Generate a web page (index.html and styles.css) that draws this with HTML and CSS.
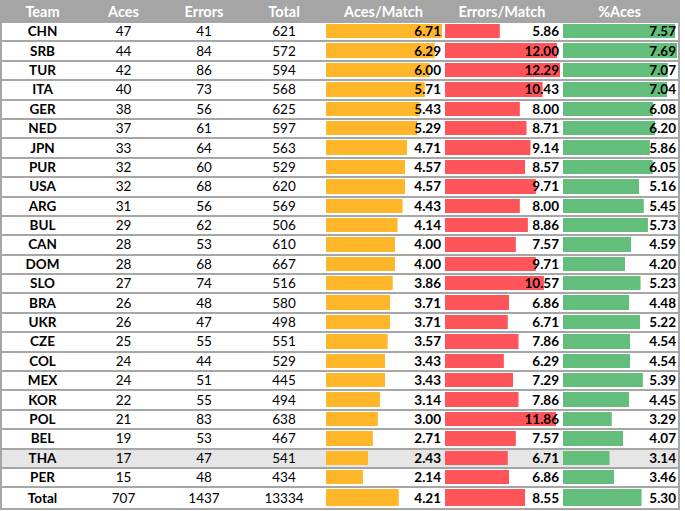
FILE: index.html
```html
<!DOCTYPE html>
<html lang="en">
<head>
<meta charset="utf-8">
<title>Serve statistics</title>
<link rel="stylesheet" href="styles.css">
</head>
<body>
<table class="stats">
  <colgroup>
    <col class="c-team"><col class="c-aces"><col class="c-err"><col class="c-tot">
    <col class="c-am"><col class="c-em"><col class="c-pa">
  </colgroup>
  <thead>
    <tr class="head"><th>Team</th><th>Aces</th><th>Errors</th><th>Total</th><th>Aces/Match</th><th>Errors/Match</th><th>%Aces</th></tr>
  </thead>
  <tbody>
    <tr><td class="team">CHN</td><td>47</td><td>41</td><td>621</td><td class="bar o" style="--p:1">6.71</td><td class="bar r" style="--p:.4768">5.86</td><td class="bar g" style="--p:.9844">7.57</td></tr>
    <tr><td class="team">SRB</td><td>44</td><td>84</td><td>572</td><td class="bar o" style="--p:.9374">6.29</td><td class="bar r" style="--p:.9764">12.00</td><td class="bar g" style="--p:1">7.69</td></tr>
    <tr><td class="team">TUR</td><td>42</td><td>86</td><td>594</td><td class="bar o" style="--p:.8942">6.00</td><td class="bar r" style="--p:1">12.29</td><td class="bar g" style="--p:.9194">7.07</td></tr>
    <tr><td class="team">ITA</td><td>40</td><td>73</td><td>568</td><td class="bar o" style="--p:.8510">5.71</td><td class="bar r" style="--p:.8487">10.43</td><td class="bar g" style="--p:.9155">7.04</td></tr>
    <tr><td class="team">GER</td><td>38</td><td>56</td><td>625</td><td class="bar o" style="--p:.8092">5.43</td><td class="bar r" style="--p:.6509">8.00</td><td class="bar g" style="--p:.7906">6.08</td></tr>
    <tr><td class="team">NED</td><td>37</td><td>61</td><td>597</td><td class="bar o" style="--p:.7884">5.29</td><td class="bar r" style="--p:.7087">8.71</td><td class="bar g" style="--p:.8062">6.20</td></tr>
    <tr><td class="team">JPN</td><td>33</td><td>64</td><td>563</td><td class="bar o" style="--p:.7019">4.71</td><td class="bar r" style="--p:.7437">9.14</td><td class="bar g" style="--p:.7620">5.86</td></tr>
    <tr><td class="team">PUR</td><td>32</td><td>60</td><td>529</td><td class="bar o" style="--p:.6811">4.57</td><td class="bar r" style="--p:.6973">8.57</td><td class="bar g" style="--p:.7867">6.05</td></tr>
    <tr><td class="team">USA</td><td>32</td><td>68</td><td>620</td><td class="bar o" style="--p:.6811">4.57</td><td class="bar r" style="--p:.7901">9.71</td><td class="bar g" style="--p:.6710">5.16</td></tr>
    <tr><td class="team">ARG</td><td>31</td><td>56</td><td>569</td><td class="bar o" style="--p:.6602">4.43</td><td class="bar r" style="--p:.6509">8.00</td><td class="bar g" style="--p:.7087">5.45</td></tr>
    <tr><td class="team">BUL</td><td>29</td><td>62</td><td>506</td><td class="bar o" style="--p:.6170">4.14</td><td class="bar r" style="--p:.7209">8.86</td><td class="bar g" style="--p:.7451">5.73</td></tr>
    <tr><td class="team">CAN</td><td>28</td><td>53</td><td>610</td><td class="bar o" style="--p:.5961">4.00</td><td class="bar r" style="--p:.6159">7.57</td><td class="bar g" style="--p:.5969">4.59</td></tr>
    <tr><td class="team">DOM</td><td>28</td><td>68</td><td>667</td><td class="bar o" style="--p:.5961">4.00</td><td class="bar r" style="--p:.7901">9.71</td><td class="bar g" style="--p:.5462">4.20</td></tr>
    <tr><td class="team">SLO</td><td>27</td><td>74</td><td>516</td><td class="bar o" style="--p:.5753">3.86</td><td class="bar r" style="--p:.8600">10.57</td><td class="bar g" style="--p:.6801">5.23</td></tr>
    <tr><td class="team">BRA</td><td>26</td><td>48</td><td>580</td><td class="bar o" style="--p:.5529">3.71</td><td class="bar r" style="--p:.5582">6.86</td><td class="bar g" style="--p:.5826">4.48</td></tr>
    <tr><td class="team">UKR</td><td>26</td><td>47</td><td>498</td><td class="bar o" style="--p:.5529">3.71</td><td class="bar r" style="--p:.5460">6.71</td><td class="bar g" style="--p:.6788">5.22</td></tr>
    <tr><td class="team">CZE</td><td>25</td><td>55</td><td>551</td><td class="bar o" style="--p:.5320">3.57</td><td class="bar r" style="--p:.6395">7.86</td><td class="bar g" style="--p:.5904">4.54</td></tr>
    <tr><td class="team">COL</td><td>24</td><td>44</td><td>529</td><td class="bar o" style="--p:.5112">3.43</td><td class="bar r" style="--p:.5118">6.29</td><td class="bar g" style="--p:.5904">4.54</td></tr>
    <tr><td class="team">MEX</td><td>24</td><td>51</td><td>445</td><td class="bar o" style="--p:.5112">3.43</td><td class="bar r" style="--p:.5932">7.29</td><td class="bar g" style="--p:.7009">5.39</td></tr>
    <tr><td class="team">KOR</td><td>22</td><td>55</td><td>494</td><td class="bar o" style="--p:.4680">3.14</td><td class="bar r" style="--p:.6395">7.86</td><td class="bar g" style="--p:.5787">4.45</td></tr>
    <tr><td class="team">POL</td><td>21</td><td>83</td><td>638</td><td class="bar o" style="--p:.4471">3.00</td><td class="bar r" style="--p:.9650">11.86</td><td class="bar g" style="--p:.4278">3.29</td></tr>
    <tr><td class="team">BEL</td><td>19</td><td>53</td><td>467</td><td class="bar o" style="--p:.4039">2.71</td><td class="bar r" style="--p:.6159">7.57</td><td class="bar g" style="--p:.5293">4.07</td></tr>
    <tr class="hl"><td class="team">THA</td><td>17</td><td>47</td><td>541</td><td class="bar o" style="--p:.3621">2.43</td><td class="bar r" style="--p:.5460">6.71</td><td class="bar g" style="--p:.4083">3.14</td></tr>
    <tr><td class="team">PER</td><td>15</td><td>48</td><td>434</td><td class="bar o" style="--p:.3189">2.14</td><td class="bar r" style="--p:.5582">6.86</td><td class="bar g" style="--p:.4499">3.46</td></tr>
    <tr><td class="team">Total</td><td>707</td><td>1437</td><td>13334</td><td class="bar o" style="--p:.6274">4.21</td><td class="bar r" style="--p:.6957">8.55</td><td class="bar g" style="--p:.6892">5.30</td></tr>
  </tbody>
</table>
</body>
</html>
```

FILE: styles.css
```css
html, body {
  margin: 0;
  padding: 0;
  background: #ffffff;
}

.stats {
  border-collapse: separate;
  border-spacing: 0;
  table-layout: fixed;
  width: 680px;
  border: 2px solid #a6a6a6;
  font-family: Lato, "Open Sans", sans-serif;
  font-size: 13.5px;
  color: #000000;
}

.c-team { width: 81px; }
.c-aces { width: 81px; }
.c-err { width: 80px; }
.c-tot { width: 80px; }
.c-am { width: 119px; }
.c-em { width: 118px; }
.c-pa { width: 117px; }

.head {
  height: 21px;
}

.head th {
  background: #a5a5a5;
  color: #ffffff;
  font-weight: 700;
  font-size: 14.5px;
  line-height: 20px;
  padding: 0 0 1px 0;
  text-align: center;
}

.stats tbody tr {
  height: 19.4px;
}

.stats td {
  padding: 0;
  line-height: 17px;
  text-align: center;
  border-bottom: 2px solid #a6a6a6;
  white-space: nowrap;
}

.stats tbody tr:last-child td {
  border-bottom: 0;
}

.team {
  font-weight: 700;
}

.hl td {
  background-color: #e7e6e6;
}

.bar {
  text-align: right !important;
  padding-right: 2px !important;
  font-weight: 700;
  background-image: linear-gradient(var(--c), var(--c));
  background-repeat: no-repeat;
  background-position: 2px 1px;
  background-size: calc((100% - 3px) * var(--p)) calc(100% - 3px);
}

.o { --c: #ffb628; }
.r { --c: #ff555a; }
.g { --c: #63be7b; }
```
